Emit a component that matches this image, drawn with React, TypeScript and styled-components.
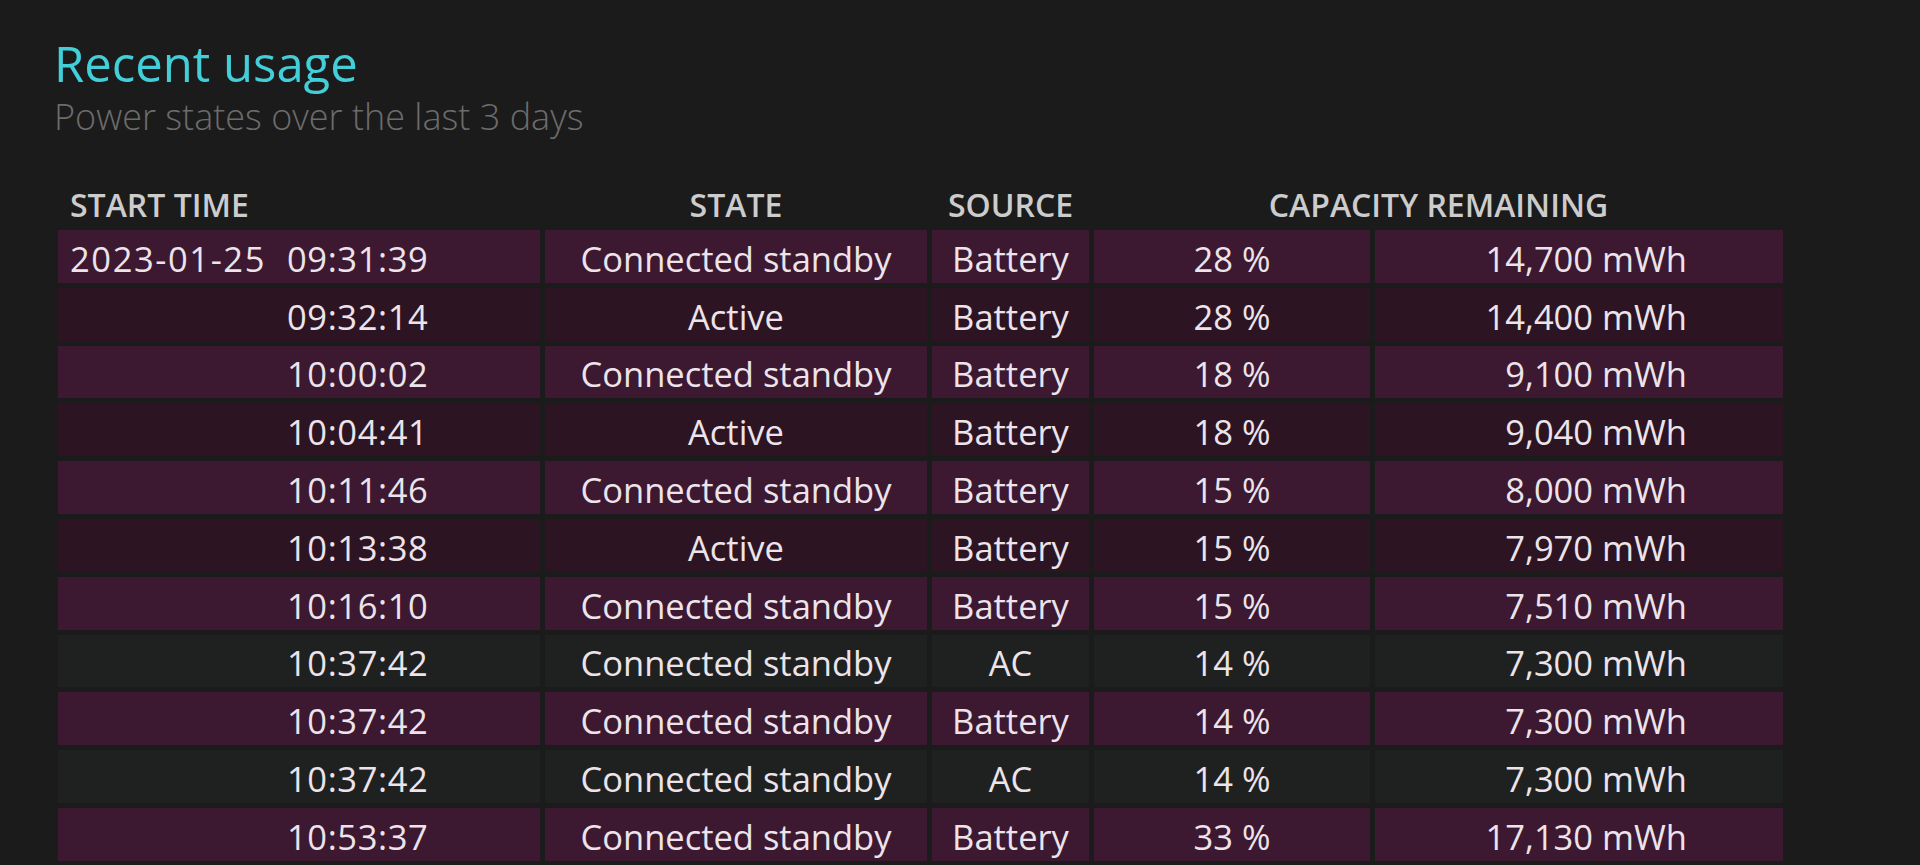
import React from "react";
import styled, { createGlobalStyle } from "styled-components";

const GlobalStyle = createGlobalStyle`
  html, body {
    margin: 0;
    padding: 0;
    background-color: #1b1b1b;
  }

  body {
    font-family: "Open Sans", "Noto Sans", "Liberation Sans", sans-serif;
    color: #ece4ea;
  }
`;

const Page = styled.div`
  min-height: 865px;
  padding: 35px 0 0 54px;
  box-sizing: border-box;
  overflow: hidden;
`;

const Title = styled.h1`
  margin: 0;
  font-size: 49px;
  line-height: 56px;
  font-weight: 400;
  color: #42cfd9;
`;

const Subtitle = styled.div`
  margin-top: 4px;
  font-size: 36px;
  line-height: 44px;
  font-weight: 300;
  color: #6c6c6c;
`;

const Table = styled.div`
  display: grid;
  grid-template-columns: 482px 382px 157px 276px 408px;
  grid-template-rows: 43px;
  grid-auto-rows: 52.8px;
  column-gap: 5px;
  row-gap: 5px;
  margin: 43px 0 0 4px;
`;

interface AlignProps {
  align?: "left" | "center" | "right";
  span?: number;
}

const HeadCell = styled.div<AlignProps>`
  grid-column: span ${({ span }) => span || 1};
  padding: 3px 12px 0;
  font-size: 32px;
  line-height: 40px;
  font-weight: 600;
  color: #cccccc;
  text-align: ${({ align }) => align || "center"};
  white-space: nowrap;
`;

type RowKind = "odd" | "even" | "ac";

const rowColors: Record<RowKind, string> = {
  odd: "#3c1831",
  even: "#2d1423",
  ac: "#1f2121",
};

interface CellProps extends AlignProps {
  kind: RowKind;
  bold?: boolean;
}

const Cell = styled.div<CellProps>`
  display: flex;
  align-items: center;
  justify-content: ${({ align }) =>
    align === "left" ? "flex-start" : align === "right" ? "flex-end" : "center"};
  padding-top: 4px;
  background-color: ${({ kind }) => rowColors[kind]};
  font-size: 34.5px;
  font-weight: ${({ bold }) => (bold ? 500 : 400)};
  white-space: nowrap;
`;

const StartCell = styled(Cell)`
  padding-left: 12px;
`;

const CapacityCell = styled(Cell)`
  padding-right: 96px;
`;

const DateText = styled.span`
  width: 217px;
  flex-shrink: 0;
  letter-spacing: 1.6px;
`;

const TimeText = styled.span`
  font-weight: 500;
  letter-spacing: 0.6px;
`;

interface UsageRow {
  date?: string;
  time: string;
  state: string;
  source: "Battery" | "AC";
  percent: number;
  capacity: string;
}

const rows: UsageRow[] = [
  { date: "2023-01-25", time: "09:31:39", state: "Connected standby", source: "Battery", percent: 28, capacity: "14,700" },
  { time: "09:32:14", state: "Active", source: "Battery", percent: 28, capacity: "14,400" },
  { time: "10:00:02", state: "Connected standby", source: "Battery", percent: 18, capacity: "9,100" },
  { time: "10:04:41", state: "Active", source: "Battery", percent: 18, capacity: "9,040" },
  { time: "10:11:46", state: "Connected standby", source: "Battery", percent: 15, capacity: "8,000" },
  { time: "10:13:38", state: "Active", source: "Battery", percent: 15, capacity: "7,970" },
  { time: "10:16:10", state: "Connected standby", source: "Battery", percent: 15, capacity: "7,510" },
  { time: "10:37:42", state: "Connected standby", source: "AC", percent: 14, capacity: "7,300" },
  { time: "10:37:42", state: "Connected standby", source: "Battery", percent: 14, capacity: "7,300" },
  { time: "10:37:42", state: "Connected standby", source: "AC", percent: 14, capacity: "7,300" },
  { time: "10:53:37", state: "Connected standby", source: "Battery", percent: 33, capacity: "17,130" },
];

const App = () => {
  return (
    <>
      <GlobalStyle />
      <Page>
        <Title>Recent usage</Title>
        <Subtitle>Power states over the last 3 days</Subtitle>

        <Table>
          <HeadCell align="left">START TIME</HeadCell>
          <HeadCell>STATE</HeadCell>
          <HeadCell>SOURCE</HeadCell>
          <HeadCell span={2}>CAPACITY REMAINING</HeadCell>

          {rows.map((row, i) => {
            const kind: RowKind =
              row.source === "AC" ? "ac" : i % 2 === 0 ? "odd" : "even";
            return (
              <React.Fragment key={i}>
                <StartCell kind={kind} align="left">
                  <DateText>{row.date}</DateText>
                  <TimeText>{row.time}</TimeText>
                </StartCell>
                <Cell kind={kind}>{row.state}</Cell>
                <Cell kind={kind}>{row.source}</Cell>
                <Cell kind={kind} bold>
                  {row.percent} %
                </Cell>
                <CapacityCell kind={kind} align="right">
                  {row.capacity} mWh
                </CapacityCell>
              </React.Fragment>
            );
          })}
        </Table>
      </Page>
    </>
  );
};

export default App;
